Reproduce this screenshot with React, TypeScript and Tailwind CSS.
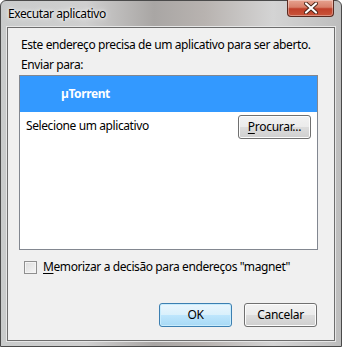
import { useState } from 'react';

const font = { fontFamily: '"Noto Sans", "Open Sans", "Liberation Sans", sans-serif' };

function WinButton({ label, accel, primary }: { label: string; accel?: boolean; primary?: boolean }) {
  const first = label.slice(0, 1);
  const rest = label.slice(1);
  return (
    <button
      type="button"
      className={
        'flex h-[24px] w-[73px] items-center justify-center rounded-[3px] border text-[12px] tracking-[-0.3px] text-black ' +
        (primary
          ? 'border-[#3c7fb1] bg-[linear-gradient(#eaf6fd_0%,#d9f0fc_50%,#bee6fd_50%,#a7d9f5_100%)] shadow-[inset_0_0_0_1px_#c8ecfd]'
          : 'border-[#707070] bg-[linear-gradient(#f2f2f2_0%,#ebebeb_50%,#dddddd_50%,#cfcfcf_100%)] shadow-[inset_0_0_0_1px_#fcfcfc]')
      }
    >
      {accel ? (
        <span>
          <span className="underline underline-offset-2">{first}</span>
          {rest}
        </span>
      ) : (
        label
      )}
    </button>
  );
}

export default function App() {
  const [remember, setRemember] = useState(false);

  return (
    <div style={font} className="h-[347px] w-[342px] overflow-hidden bg-white tracking-[-0.4px]">
      <div className="flex h-[347px] w-[342px] flex-col rounded-t-[6px] border border-[#4a4a4a] bg-[linear-gradient(90deg,#c9cbcb_0%,#cfcfcf_25%,#a9a6a4_45%,#b8b3b0_60%,#d4d4d4_80%,#bdbdbd_100%)] px-[6px] pb-[5px]">
        {/* title bar */}
        <div className="relative flex h-[26px] shrink-0 items-center pl-[1px]">
          <span className="text-[12px] text-black [text-shadow:0_0_6px_#ffffff,0_0_3px_#ffffff]">Executar aplicativo</span>
          <div className="absolute right-[1px] top-[-1px] flex h-[17px] w-[47px] items-center justify-center rounded-b-[4px] border border-t-0 border-[#5a2a20] bg-[linear-gradient(#e6a28f_0%,#d8806a_45%,#c0402a_55%,#c9553b_100%)] shadow-[inset_0_0_0_1px_rgba(255,255,255,0.35)]">
            <svg width="14" height="12" viewBox="0 0 14 12">
              <path d="M2 1.5 L12 10.5 M12 1.5 L2 10.5" stroke="#4a2418" strokeWidth="4" strokeLinecap="round" />
              <path d="M2 1.5 L12 10.5 M12 1.5 L2 10.5" stroke="#ffffff" strokeWidth="2.2" strokeLinecap="round" />
            </svg>
          </div>
        </div>

        {/* client area */}
        <div className="flex flex-1 flex-col border border-[#6d6d6d] bg-[#f0f0f0] shadow-[0_0_0_1px_#e6e6e6]">
          <p className="ml-[13px] mt-[9px] text-[12px] leading-[15px] text-black">
            Este endereço precisa de um aplicativo para ser aberto.
          </p>
          <p className="ml-[13px] mt-[5px] text-[12px] leading-[15px] text-black">Enviar para:</p>

          <div className="ml-[11px] mt-[3px] h-[175px] w-[299px] border border-[#828790] bg-white">
            <div className="flex h-[36px] items-center bg-[#3399ff] pl-[41px] text-[12px] font-bold text-white">
              µTorrent
            </div>
            <div className="flex h-[28px] items-center justify-between pl-[6px] pr-[6px]">
              <span className="text-[12px] text-black">Selecione um aplicativo</span>
              <div className="mt-[2px]">
                <WinButton label="Procurar..." accel />
              </div>
            </div>
          </div>

          <label className="ml-[16px] mt-[8px] flex cursor-default items-center gap-[6px]">
            <span
              onClick={() => setRemember((v) => !v)}
              className="flex h-[13px] w-[13px] items-center justify-center border border-[#8f8f8f] bg-[linear-gradient(135deg,#dcdcdc,#f6f6f6)] shadow-[inset_0_0_0_1px_#f4f4f4]"
            >
              {remember && <span className="text-[10px] leading-none text-[#333]">✓</span>}
            </span>
            <span className="text-[12px] text-black">
              <span className="underline underline-offset-2">M</span>emorizar a decisão para endereços "magnet"
            </span>
          </label>

          <div className="mt-auto mb-[13px] flex justify-end gap-[12px] pr-[17px]">
            <WinButton label="OK" primary />
            <WinButton label="Cancelar" />
          </div>
        </div>
      </div>
    </div>
  );
}
